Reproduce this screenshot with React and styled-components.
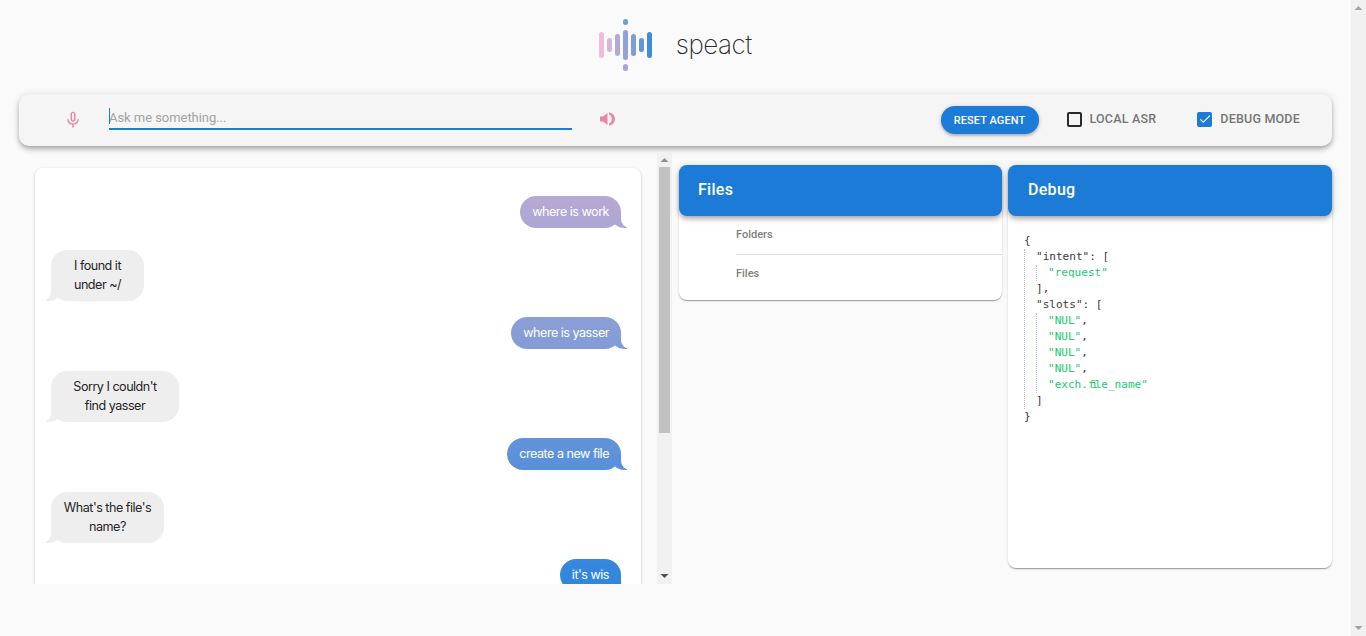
import React from "react";
import styled, { createGlobalStyle } from "styled-components";
import { MdMicNone, MdCheck } from "react-icons/md";

const BLUE = "#1b7bd6";
const PINK = "#e985a8";

const GlobalStyle = createGlobalStyle`
  body {
    margin: 0;
    background: #fafafa;
    font-family: Roboto, "Liberation Sans", sans-serif;
  }
  * {
    box-sizing: border-box;
  }
`;

const Page = styled.div`
  height: 636px;
  display: flex;
  overflow: hidden;
`;

const Content = styled.div`
  flex: 1;
  min-width: 0;
`;

const Rail = styled.div`
  flex: none;
  width: 15px;
  height: ${(p) => p.$h}px;
  display: flex;
  flex-direction: column;
  background: #f1f1f1;
`;

const RailArrow = styled.svg`
  flex: none;
  width: 15px;
  height: 15px;
  fill: ${(p) => p.$c};
`;

const RailTrack = styled.div`
  flex: 1;
  padding: 0 2px;
`;

const RailThumb = styled.div`
  height: ${(p) => p.$h}px;
  background: #c1c1c1;
`;

const Header = styled.header`
  height: 94px;
  display: flex;
  align-items: center;
  justify-content: center;
  gap: 24px;
  padding-bottom: 4px;
`;

const Wave = styled.div`
  display: flex;
  align-items: center;
  gap: 3.4px;
`;

const WaveColumn = styled.div`
  display: flex;
  flex-direction: column;
  align-items: center;
  gap: 4.5px;
`;

const Bar = styled.span`
  display: block;
  width: 4.6px;
  height: ${(p) => p.$h}px;
  border-radius: 3px;
  background: ${(p) => p.$c};
`;

const Brand = styled.span`
  margin-bottom: 2px;
  font-family: Inter, sans-serif;
  font-weight: 200;
  font-size: 26px;
  color: #2c2c2c;
  letter-spacing: -0.5px;
`;

const Toolbar = styled.section`
  height: 52px;
  margin: 0 19px;
  padding: 0 32px 0 44px;
  display: flex;
  align-items: center;
  background: #f5f5f5;
  border-radius: 10px;
  box-shadow: 0 2px 4px -1px rgba(0, 0, 0, 0.2), 0 4px 5px 0 rgba(0, 0, 0, 0.14), 0 1px 10px 0 rgba(0, 0, 0, 0.12);
`;

const MicIcon = styled(MdMicNone)`
  width: 20px;
  height: 20px;
  color: ${PINK};
  flex: none;
`;

const SpeakerIcon = styled.svg`
  width: 15px;
  height: 14px;
  margin: 0 0 2px 28px;
  flex: none;
  fill: ${PINK};
`;

const InputWrap = styled.div`
  position: relative;
  width: 463px;
  margin-left: 26px;
`;

const Caret = styled.span`
  position: absolute;
  left: 0;
  top: 0;
  width: 1px;
  height: 16px;
  background: ${BLUE};
`;

const AskInput = styled.input`
  display: block;
  width: 100%;
  height: 22px;
  margin-bottom: 2px;
  padding: 0 0 2px;
  border: 0;
  border-bottom: 2px solid ${BLUE};
  outline: none;
  background: transparent;
  font: 400 13px Roboto, sans-serif;
  letter-spacing: -0.05px;
  &::placeholder {
    color: #a3a3a3;
    opacity: 1;
  }
`;

const ResetButton = styled.button`
  margin-left: auto;
  width: 98px;
  height: 28px;
  border: 0;
  border-radius: 14px;
  background: ${BLUE};
  color: #fff;
  font: 500 11px Roboto, sans-serif;
  letter-spacing: 0.1px;
  box-shadow: 0 1px 5px rgba(0, 0, 0, 0.2), 0 2px 2px rgba(0, 0, 0, 0.14);
`;

const Toggle = styled.label`
  display: flex;
  align-items: center;
  gap: 8px;
  margin-left: ${(p) => p.$gap}px;
  margin-bottom: 2px;
  font: 500 12.5px Roboto, sans-serif;
  letter-spacing: 0.2px;
  color: #757575;
`;

const ToggleText = styled.span`
  position: relative;
  top: -1px;
`;

const Box = styled.span`
  width: 15px;
  height: 15px;
  display: flex;
  align-items: center;
  justify-content: center;
  border-radius: 2px;
  border: 2px solid ${(p) => (p.$checked ? BLUE : "#2b2b2b")};
  background: ${(p) => (p.$checked ? BLUE : "transparent")};
  color: #fff;
  svg {
    flex: none;
    width: 14px;
    height: 14px;
  }
`;

const Main = styled.main`
  margin: 6px 19px 0;
  display: grid;
  grid-template-columns: 654px 323px 324px;
  column-gap: 6px;
  align-items: start;
`;

const ChatColumn = styled.div`
  display: flex;
  margin-right: 1px;
`;

const ChatViewport = styled.div`
  flex: 1;
  height: 432px;
  padding: 16px;
  overflow: hidden;
`;

const ChatCard = styled.div`
  min-height: 621px;
  padding: 12px 20px 12px 16px;
  display: flex;
  flex-direction: column;
  background: #fff;
  border-radius: 8px;
  box-shadow: 0 1px 3px rgba(0, 0, 0, 0.2), 0 1px 1px rgba(0, 0, 0, 0.14), 0 2px 1px -1px rgba(0, 0, 0, 0.12);
`;

const Bubble = styled.div`
  position: relative;
  font: 400 12.6px/19px Inter, sans-serif;
  letter-spacing: -0.5px;
  text-align: center;
  border-radius: 16px;
  &::before,
  &::after {
    content: "";
    position: absolute;
    bottom: 0;
    height: 16px;
  }
`;

const UserBubble = styled(Bubble)`
  align-self: flex-end;
  margin-top: 16px;
  padding: 6px 12px 7px;
  color: #fff;
  background: linear-gradient(#fbbbcf, #1e81de) fixed;
  &::before {
    right: -6px;
    width: 16px;
    background: linear-gradient(#fbbbcf, #1e81de) fixed;
    border-bottom-left-radius: 14px 12px;
  }
  &::after {
    right: -16px;
    width: 16px;
    background: #fff;
    border-bottom-left-radius: 9px;
  }
`;

const BotBubble = styled(Bubble)`
  align-self: flex-start;
  width: ${(p) => p.$w}px;
  margin-top: 22px;
  padding: 6px 0 7px;
  color: #262626;
  background: #eeeeee;
  &::before {
    left: -5px;
    width: 16px;
    background: #eeeeee;
    border-bottom-right-radius: 14px 12px;
  }
  &::after {
    left: -16px;
    width: 16px;
    background: #fff;
    border-bottom-right-radius: 9px;
  }
`;

const BubbleText = styled.span`
  position: relative;
  z-index: 1;
`;

const Card = styled.section`
  margin-top: 13px;
  background: #fff;
  border-radius: 8px;
  height: ${(p) => p.$h}px;
  box-shadow: 0 2px 1px -1px rgba(0, 0, 0, 0.2), 0 1px 1px rgba(0, 0, 0, 0.14), 0 1px 3px rgba(0, 0, 0, 0.12);
`;

const CardHeader = styled.h2`
  height: 51px;
  margin: 0;
  padding: 0 19px 2px ${(p) => p.$inset}px;
  display: flex;
  align-items: center;
  border-radius: 8px;
  background: ${BLUE};
  color: #fff;
  font: 500 16px Roboto, sans-serif;
  letter-spacing: 0.3px;
  box-shadow: 0 2px 4px -1px rgba(0, 0, 0, 0.2), 0 4px 5px 0 rgba(0, 0, 0, 0.14), 0 1px 10px 0 rgba(0, 0, 0, 0.12);
`;

const FileRow = styled.div`
  height: 38px;
  margin-left: 57px;
  padding-bottom: 2px;
  display: flex;
  align-items: center;
  font: 500 11px Roboto, sans-serif;
  color: #808080;
  & + & {
    height: 39px;
    border-top: 1px solid #dddddd;
  }
`;

const JsonView = styled.div`
  padding: 17px 16px;
  font: 400 11.05px/16px "DejaVu Sans Mono", monospace;
  color: #3a3a3a;
`;

const JsonLine = styled.div`
  white-space: pre;
`;

const JsonBlock = styled.div`
  padding-left: 11px;
  border-left: 1px dotted #b6c2d6;
`;

const JsonString = styled.span`
  color: #1bc96f;
`;

// the reference font joins "fi" into one cell
const Ligature = styled.span`
  letter-spacing: -3.3px;
`;

const thread = [
  { from: "user", text: "where is work" },
  { from: "bot", w: 93, text: ["I found it", "under ~/"] },
  { from: "user", text: "where is yasser" },
  { from: "bot", w: 128, text: ["Sorry I couldn't", "find yasser"] },
  { from: "user", text: "create a new file" },
  { from: "bot", w: 113, text: ["What's the file's", "name?"] },
  { from: "user", text: "it's wis" },
];

const debugResult = {
  intent: ["request"],
  slots: ["NUL", "NUL", "NUL", "NUL", "exch.file_name"],
};

function Logo() {
  return (
    <Wave>
      <Bar $h={26} $c="#f0bcd8" />
      <Bar $h={14} $c="#d2b6dc" />
      <Bar $h={22} $c="#b2a9d8" />
      <WaveColumn>
        <Bar $h={6} $c="#6f9bdf" />
        <Bar $h={30} $c="#92a2d8" />
        <Bar $h={7} $c="#aaa5d8" />
      </WaveColumn>
      <Bar $h={22} $c="#7d9dd8" />
      <Bar $h={14} $c="#5f97dc" />
      <Bar $h={26} $c="#3f8cdc" />
    </Wave>
  );
}

function Speaker() {
  return (
    <SpeakerIcon viewBox="0 0 15 14">
      <polygon points="0,4.5 3,4.5 7.5,1 7.5,13 3,9.5 0,9.5" />
      <path d="M9,0.3C13,1.3 15,4 15,7C15,10 13,12.7 9,13.7L9,11.5C11,10.5 11.8,9 11.8,7C11.8,5 11,3.5 9,2.5Z" />
    </SpeakerIcon>
  );
}

function Scrollbar({ height, thumb, upColor, downColor }) {
  return (
    <Rail $h={height}>
      <RailArrow $c={upColor} viewBox="0 0 15 15">
        <polygon points="7.5,6 11.5,10 3.5,10" />
      </RailArrow>
      <RailTrack>{thumb && <RailThumb $h={thumb} />}</RailTrack>
      <RailArrow $c={downColor} viewBox="0 0 15 15">
        <polygon points="3.5,5 11.5,5 7.5,9" />
      </RailArrow>
    </Rail>
  );
}

function Check({ label, checked, gap }) {
  return (
    <Toggle $gap={gap}>
      <Box $checked={checked}>{checked && <MdCheck />}</Box>
      <ToggleText>{label}</ToggleText>
    </Toggle>
  );
}

function Chat() {
  return (
    <ChatColumn>
      <ChatViewport>
        <ChatCard>
          {thread.map((msg, i) =>
            msg.from === "user" ? (
              <UserBubble key={i}>
                <BubbleText>{msg.text}</BubbleText>
              </UserBubble>
            ) : (
              <BotBubble key={i} $w={msg.w}>
                <BubbleText>
                  {msg.text[0]}
                  <br />
                  {msg.text[1]}
                </BubbleText>
              </BotBubble>
            )
          )}
        </ChatCard>
      </ChatViewport>
      <Scrollbar height={432} thumb={266} upColor="#909090" downColor="#505050" />
    </ChatColumn>
  );
}

function JsonText({ value }) {
  const parts = value.split("fi");
  return (
    <JsonString>
      "{parts[0]}
      {parts.length > 1 && <Ligature>fi</Ligature>}
      {parts[1]}"
    </JsonString>
  );
}

function JsonList({ name, items, last }) {
  return (
    <>
      <JsonLine>{`"${name}": [`}</JsonLine>
      <JsonBlock>
        {items.map((item, i) => (
          <JsonLine key={i}>
            <JsonText value={item} />
            {i < items.length - 1 ? "," : ""}
          </JsonLine>
        ))}
      </JsonBlock>
      <JsonLine>{last ? "]" : "],"}</JsonLine>
    </>
  );
}

export default function App() {
  const keys = Object.keys(debugResult);
  return (
    <Page>
      <GlobalStyle />
      <Content>
        <Header>
          <Logo />
          <Brand>speact</Brand>
        </Header>
        <Toolbar>
          <MicIcon />
          <InputWrap>
            <AskInput placeholder="Ask me something..." />
            <Caret />
          </InputWrap>
          <Speaker />
          <ResetButton>RESET AGENT</ResetButton>
          <Check label="LOCAL ASR" gap={28} />
          <Check label="DEBUG MODE" checked gap={41} />
        </Toolbar>
        <Main>
          <Chat />
          <Card $h={135}>
            <CardHeader $inset={19}>Files</CardHeader>
            <FileRow>Folders</FileRow>
            <FileRow>Files</FileRow>
          </Card>
          <Card $h={403}>
            <CardHeader $inset={20}>Debug</CardHeader>
            <JsonView>
              <JsonLine>{"{"}</JsonLine>
              <JsonBlock>
                {keys.map((key, i) => (
                  <JsonList key={key} name={key} items={debugResult[key]} last={i === keys.length - 1} />
                ))}
              </JsonBlock>
              <JsonLine>{"}"}</JsonLine>
            </JsonView>
          </Card>
        </Main>
      </Content>
      <Scrollbar height={636} upColor="#a3a3a3" downColor="#a3a3a3" />
    </Page>
  );
}
